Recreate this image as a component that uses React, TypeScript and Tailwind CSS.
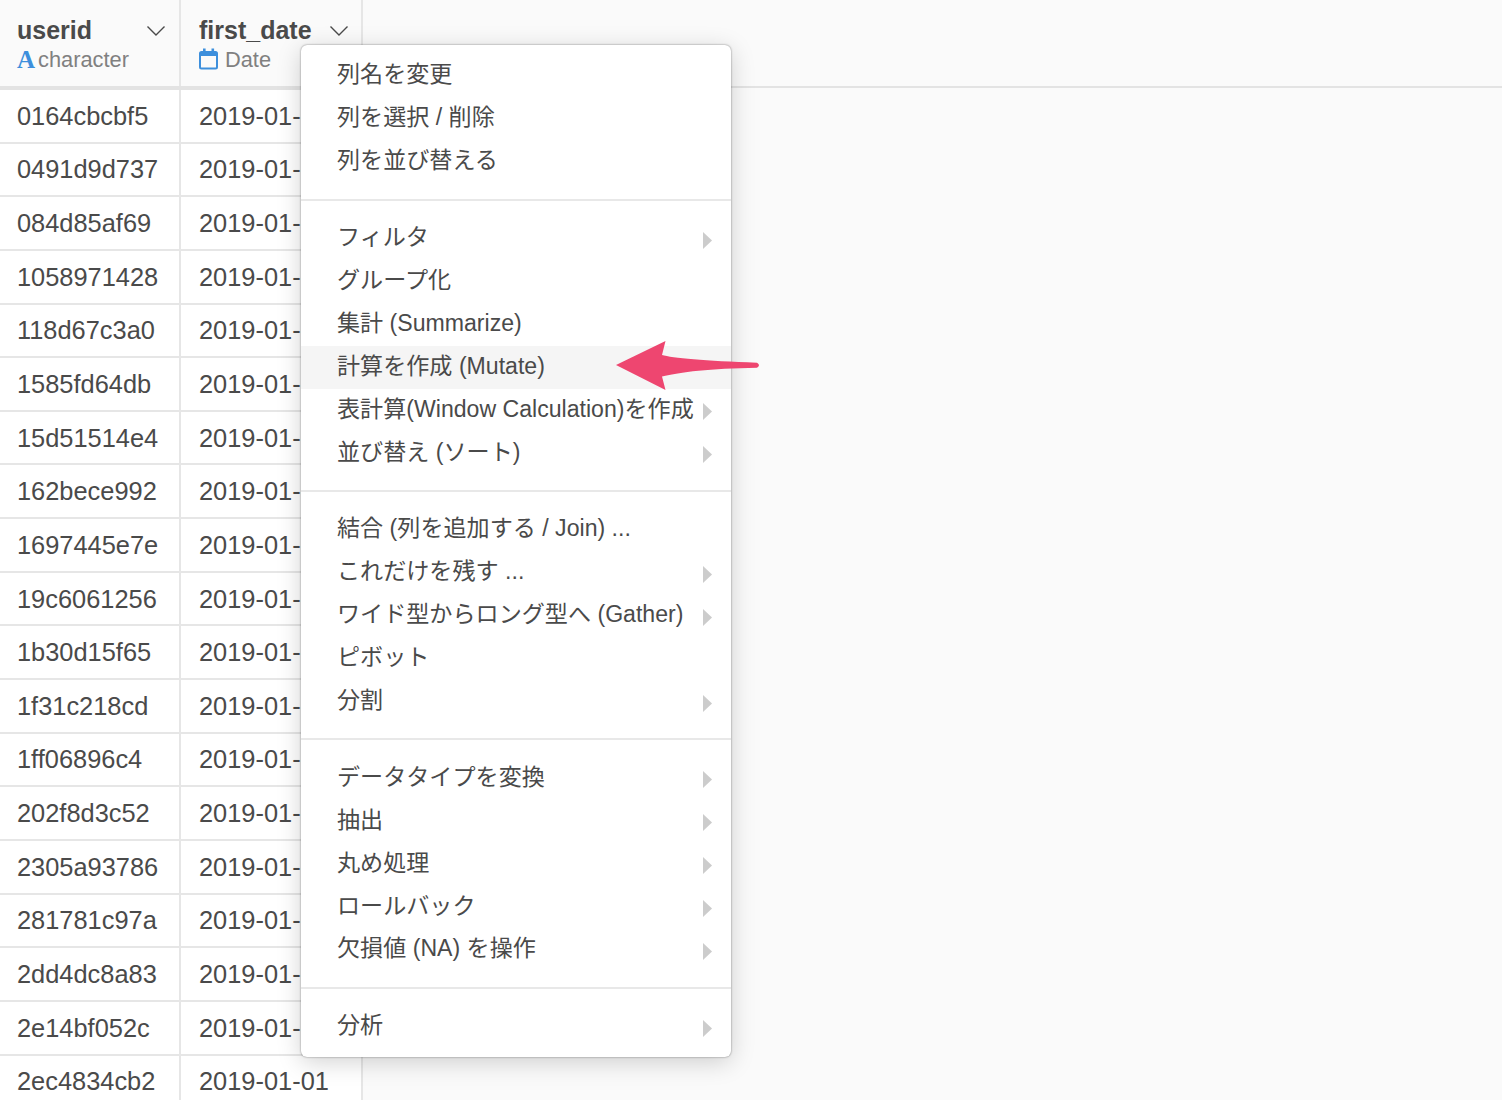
const FONT = "font-['Liberation_Sans','Noto_Sans_CJK_JP',sans-serif]";

const rows = [
  "0164cbcbf5","0491d9d737","084d85af69","1058971428","118d67c3a0","1585fd64db","15d51514e4","162bece992","1697445e7e","19c6061256","1b30d15f65","1f31c218cd","1ff06896c4","202f8d3c52","2305a93786","281781c97a","2dd4dc8a83","2e14bf052c","2ec4834cb2",
];

type Item = { label: string; arrow?: boolean; active?: boolean };
const sections: Item[][] = [
  [{ label: "列名を変更" }, { label: "列を選択 / 削除" }, { label: "列を並び替える" }],
  [
    { label: "フィルタ", arrow: true },
    { label: "グループ化" },
    { label: "集計 (Summarize)" },
    { label: "計算を作成 (Mutate)", active: true },
    { label: "表計算(Window Calculation)を作成", arrow: true },
    { label: "並び替え (ソート)", arrow: true },
  ],
  [
    { label: "結合 (列を追加する / Join) ..." },
    { label: "これだけを残す ...", arrow: true },
    { label: "ワイド型からロング型へ (Gather)", arrow: true },
    { label: "ピボット" },
    { label: "分割", arrow: true },
  ],
  [
    { label: "データタイプを変換", arrow: true },
    { label: "抽出", arrow: true },
    { label: "丸め処理", arrow: true },
    { label: "ロールバック", arrow: true },
    { label: "欠損値 (NA) を操作", arrow: true },
  ],
  [{ label: "分析", arrow: true }],
];

function Chevron() {
  return (
    <svg width="20" height="12" viewBox="0 0 20 12" fill="none" className="mt-[2px] shrink-0">
      <path d="M1.5 1.5 L10 10 L18.5 1.5" stroke="#4a4a4a" strokeWidth="1.4" />
    </svg>
  );
}

function CalendarIcon() {
  return (
    <svg width="19" height="22" viewBox="0 0 19 22" fill="none" className="-mt-[3px] shrink-0">
      <rect x="1" y="4" width="17" height="16.5" rx="1.5" stroke="#3d8fdc" strokeWidth="2" />
      <rect x="1" y="4" width="17" height="4" fill="#3d8fdc" />
      <rect x="4" y="0.5" width="2.6" height="4" fill="#3d8fdc" />
      <rect x="12.5" y="0.5" width="2.6" height="4" fill="#3d8fdc" />
    </svg>
  );
}

function MenuRow({ item }: { item: Item }) {
  return (
    <div className={`flex h-[42.9px] items-center justify-between pl-[36px] pr-[19px] ${item.active ? "bg-[#f5f5f5]" : ""}`}>
      <span className="-mt-[3px] whitespace-nowrap text-[23.1px] leading-none text-[#4a4a4a]">{item.label}</span>
      {item.arrow && (
        <svg width="9" height="17" viewBox="0 0 9 17" className="mt-[2px] shrink-0">
          <path d="M0 0 L9 8.5 L0 17 Z" fill="#cccccc" />
        </svg>
      )}
    </div>
  );
}

export default function App() {
  return (
    <div className={`${FONT} relative h-[1100px] w-[1502px] overflow-hidden bg-[#fafafa]`}>
      <div className="flex h-[88px] border-b-2 border-[#e3e3e3]">
        <div className="flex w-[181px] shrink-0 flex-col border-r-2 border-[#e6e6e6] pl-[17px] pr-[13px] pt-[16px]">
          <div className="flex items-center justify-between">
            <span className="text-[25px] font-bold leading-[28px] text-[#4a4a4a]">userid</span>
            <Chevron />
          </div>
          <div className="mt-[2px] flex items-center gap-[3px]">
            <span className="font-['Liberation_Serif',serif] text-[25px] font-bold leading-[28px] text-[#3d8fdc]">A</span>
            <span className="text-[21.8px] leading-[28px] text-[#808080]">character</span>
          </div>
        </div>
        <div className="flex w-[182px] shrink-0 flex-col border-r-2 border-[#e6e6e6] pl-[18px] pr-[12px] pt-[16px]">
          <div className="flex items-center justify-between">
            <span className="text-[25px] font-bold leading-[28px] text-[#4a4a4a]">first_date</span>
            <Chevron />
          </div>
          <div className="mt-[2px] flex items-center gap-[7px]">
            <CalendarIcon />
            <span className="text-[21.8px] leading-[28px] text-[#808080]">Date</span>
          </div>
        </div>
      </div>
      <div className="w-[363px] border-r-2 border-t-2 border-r-[#e6e6e6] border-t-[#e3e3e3] bg-white">
        {rows.map((r) => (
          <div key={r} className="flex h-[53.65px] border-b-2 border-[#e6e6e6] text-[25.4px] text-[#4a4a4a]">
            <div className="flex w-[181px] shrink-0 items-center border-r-2 border-[#e6e6e6] pl-[17px]">{r}</div>
            <div className="flex items-center whitespace-nowrap pl-[18px]">2019-01-01</div>
          </div>
        ))}
      </div>

      <div className="absolute left-[301px] top-[45px] h-[1012px] w-[430px] rounded-[6px] bg-white pt-[10px] shadow-[0_0_2px_rgba(0,0,0,0.5),0_5px_24px_rgba(0,0,0,0.18)]">
        {sections.map((s, i) => (
          <div key={i} className={i > 0 ? "mt-[15px] border-t-2 border-[#e8e8e8] pt-[17px]" : ""}>
            {s.map((it) => (
              <MenuRow key={it.label} item={it} />
            ))}
          </div>
        ))}
      </div>

      <svg className="absolute left-[610px] top-[335px]" width="155" height="60" viewBox="0 0 155 60">
        <path d="M6 30 L55.5 6 L52 20 C 62 23 95 26 147 27.7 Q 151 30.2 147 32.7 C 100 33.5 70 37 52 41.5 L55.5 55 Z" fill="#ee4670" />
      </svg>
    </div>
  );
}
